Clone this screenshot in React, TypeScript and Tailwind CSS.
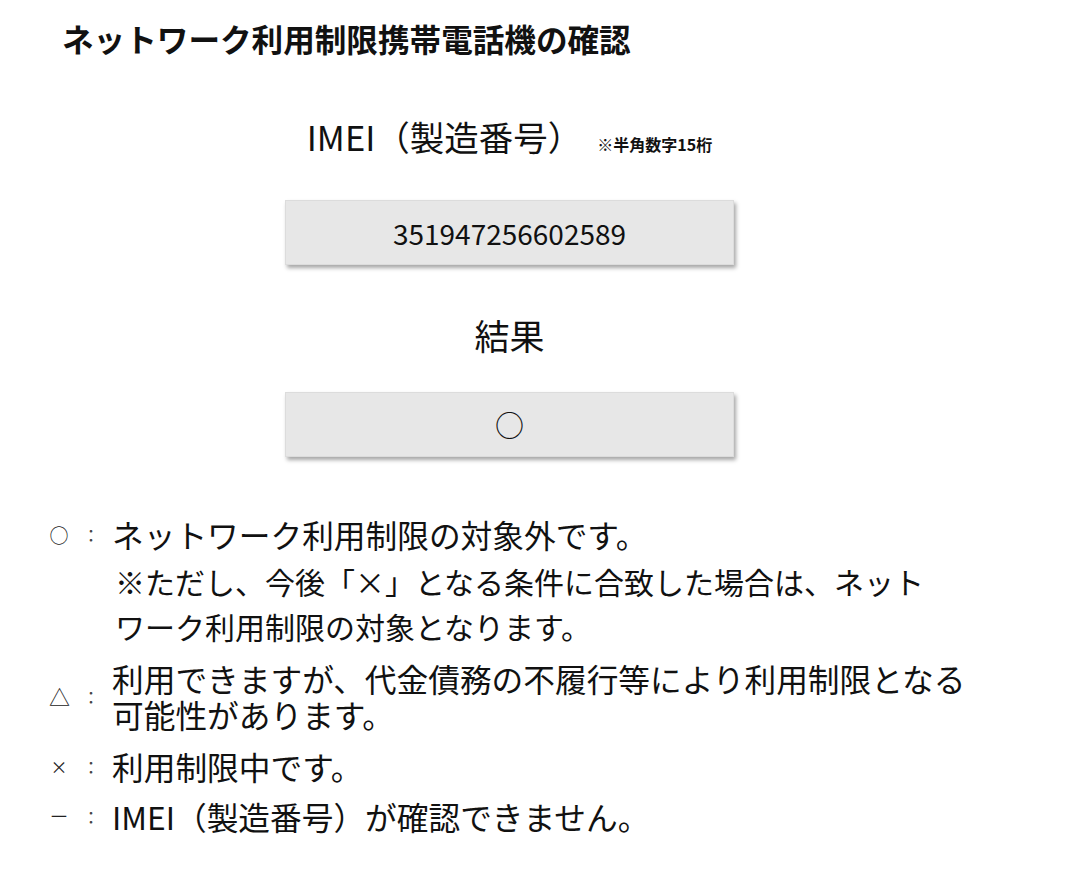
const font = { fontFamily: '"Noto Sans CJK JP", "Noto Sans", sans-serif' };

type LegendRowProps = {
  mark: string;
  children: React.ReactNode;
  className?: string;
  markClass?: string;
};

function Mark({ mark, markClass = "" }: { mark: string; markClass?: string }) {
  return (
    <div className="flex h-[36px] w-[63px] shrink-0 items-center text-[#222]">
      <span className={`inline-block w-[20px] text-center leading-none ${markClass || "text-[19px]"}`}>{mark}</span>
      <span className="ml-[9px] inline-block w-[26px] text-center text-[17px] leading-none text-[#444]">：</span>
    </div>
  );
}

function LegendRow({ mark, children, className = "", markClass = "" }: LegendRowProps) {
  return (
    <div className={`flex items-center ${className}`}>
      <Mark mark={mark} markClass={markClass} />
      <div className="text-[31.7px] text-[#111]">{children}</div>
    </div>
  );
}

function ValueBox({ children }: { children: React.ReactNode }) {
  return (
    <div className="flex h-[65px] w-[449px] items-center justify-center border border-[#dcdcdc] bg-[#e7e7e7] shadow-[2px_3px_4px_rgba(0,0,0,0.35)]">
      {children}
    </div>
  );
}

export default function App() {
  return (
    <div className="min-h-[894px] w-[1080px] bg-white text-[#111]" style={font}>
      <h1 className="pl-[62px] pt-[22px] text-[31.6px] font-bold leading-[32px]">
        ネットワーク利用制限携帯電話機の確認
      </h1>

      <div className="flex w-[1019px] flex-col items-center">
        <div className="mt-[64px] flex items-baseline">
          <span className="text-[34.5px] leading-[36px]">IMEI（製造番号）</span>
          <span className="ml-[15px] text-[16px] font-bold leading-none">※半角数字15桁</span>
        </div>

        <div className="mt-[46px]">
          <ValueBox>
            <span className="text-[28px] leading-none">351947256602589</span>
          </ValueBox>
        </div>

        <div className="mt-[52px] text-[35px] leading-[35px]">結果</div>

        <div className="mt-[40px]">
          <ValueBox>
            <span className="text-[29px] leading-none">○</span>
          </ValueBox>
        </div>
      </div>

      <div className="mt-[59px] pl-[49px]">
        <div className="flex items-start">
          <Mark mark="○" />
          <div className="text-[#111]">
            <p className="text-[31.7px] leading-[36px]">ネットワーク利用制限の対象外です。</p>
            <p className="mt-[7px] pl-[3px] text-[30px] leading-[45px]">
              ※ただし、今後「×」となる条件に合致した場合は、ネット
              <br />
              ワーク利用制限の対象となります。
            </p>
          </div>
        </div>

        <div className="mt-[11px] flex items-center">
          <Mark mark="△" markClass="text-[21px]" />
          <div className="text-[31.7px] leading-[36px] text-[#111]">
            <p>利用できますが、代金債務の不履行等により利用制限となる</p>
            <p>可能性があります。</p>
          </div>
        </div>

        <LegendRow mark="×" className="mt-[16px]" markClass="text-[17px]">
          <p className="leading-[36px]">利用制限中です。</p>
        </LegendRow>

        <LegendRow mark="－" className="mt-[14px]" markClass="text-[20px]">
          <p className="leading-[36px]">IMEI（製造番号）が確認できません。</p>
        </LegendRow>
      </div>
    </div>
  );
}
